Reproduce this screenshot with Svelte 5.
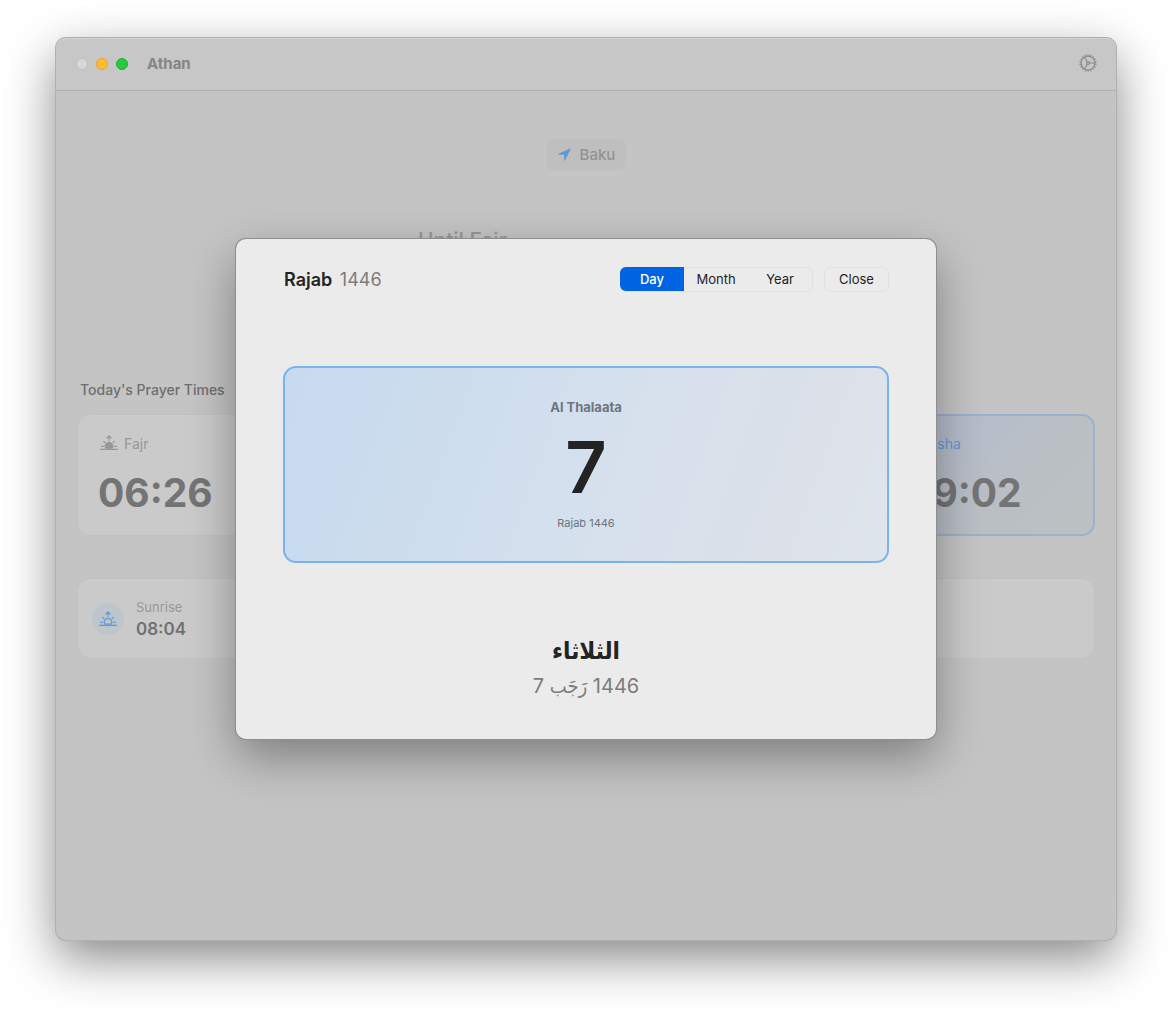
<script>
  const views = ['Day', 'Month', 'Year'];
  let view = $state('Day');
  let open = $state(true);

  // Teeth of the settings gear, one every 20 degrees
  const teeth = Array.from({ length: 18 }, (_, i) => i * 20);
</script>

{#snippet sunrise(filled)}
  <svg class="sun" viewBox="0 0 18 16" aria-hidden="true">
    <path d="M9 5.4V1.200M6.800 3.200 9 1l2.200 2.200" />
    <path d="M.7 14.400h16.600M1.600 11.400h1.600M14.800 11.400h1.600M3.700 6.300l1.200 1.200M14.300 6.300l-1.200 1.200" />
    <path class:filled d="M5.900 13.200a3.700 3.700 0 1 1 6.200 0z" />
  </svg>
{/snippet}

<div class="desktop">
  <div class="window">
    <header class="titlebar">
      <div class="lights">
        <button class="light" aria-label="Close window"></button>
        <button class="light amber" aria-label="Minimize window"></button>
        <button class="light green" aria-label="Zoom window"></button>
      </div>
      <h1>Athan</h1>
      <button class="gear" aria-label="Settings">
        <svg viewBox="0 0 18 18" aria-hidden="true">
          <circle cx="9" cy="9" r="6.900" />
          <circle cx="9" cy="9" r="1.400" />
          <path d="M10.500 9H16M8.200 7.700 5.500 3M8.200 10.300 5.500 15" />
          {#each teeth as angle}
            <path d="M9 2V.3" transform="rotate({angle} 9 9)" />
          {/each}
        </svg>
      </button>
    </header>

    <main>
      <button class="place">
        <svg viewBox="0 0 12 12" aria-hidden="true"><path d="M11.2.4.5 5.3c-.6.3-.5.9.2.9l4.900.1.1 4.900c0 .7.6.8.9.2L11.700.9c.2-.4-.1-.7-.5-.5z" /></svg>
        Baku
      </button>

      <section class="next"><h2>Until Fajr</h2></section>

      <h2 class="heading">Today's Prayer Times</h2>
      <section class="prayers">
        <article class="prayer">
          <div class="label">{@render sunrise(true)}Fajr</div>
          <div class="time">06:26</div>
        </article>
        <article class="prayer current">
          <div class="label">
            <svg class="moon" viewBox="0 0 12 16" aria-hidden="true"><path class="filled" d="M5 3a5 5 0 1 0 6 7A6 6 0 0 1 5 3z" /></svg>Isha
          </div>
          <div class="time">19:02</div>
        </article>
      </section>

      <section class="extra">
        <div class="badge">{@render sunrise(false)}</div>
        <div>
          <div class="name">Sunrise</div>
          <div class="clock">08:04</div>
        </div>
      </section>
    </main>

    {#if open}
      <div class="sheet" role="dialog" aria-label="Calendar">
        <div class="toolbar">
          <h2>Rajab <span>1446</span></h2>
          <div class="segments">
            {#each views as name}
              <button class:active={view === name} onclick={() => (view = name)}>{name}</button>
            {/each}
          </div>
          <button class="close" onclick={() => (open = false)}>Close</button>
        </div>
        <div class="day">
          <div class="weekday">Al Thalaata</div>
          <div class="number">7</div>
          <div class="month">Rajab 1446</div>
        </div>
        <div class="arabic" lang="ar" dir="rtl">
          <div class="arabic-day">الثلاثاء</div>
          <div class="arabic-date">1446 رَجَب 7</div>
        </div>
      </div>
    {/if}
  </div>
</div>

<style>
  :global(body) {
    margin: 0;
    background: #fff;
    font-family: Inter, "DejaVu Sans", sans-serif;
  }
  h1, h2 { margin: 0; font-weight: 500; }
  button {
    margin: 0;
    padding: 0;
    border: 0;
    background: none;
    font: inherit;
    color: inherit;
  }
  svg { display: block; fill: none; stroke: currentColor; }

  .desktop {
    box-sizing: border-box;
    min-height: 100vh;
    padding: 38px 56px 74px;
    display: flex;
  }
  .window {
    position: relative;
    flex: 1;
    border-radius: 10px;
    background: #c4c4c4;
    box-shadow: 0 0 0 1px #b0b0b0, 0 18px 50px rgba(0, 0, 0, 0.48);
  }
  .titlebar {
    display: flex;
    align-items: center;
    box-sizing: border-box;
    height: 53px;
    padding: 0 18px 2px 20px;
    border-bottom: 1px solid #b0b0b0;
    border-radius: 10px 10px 0 0;
    background: #c7c7c7;
    box-shadow: inset 0 1px #d2d2d2;
  }
  .lights { display: flex; gap: 8px; padding-top: 2px; }
  .light {
    width: 12px;
    height: 12px;
    border: 1px solid #c0bfbe;
    border-radius: 50%;
    background: #d9d8d7;
  }
  .amber { background: #febc2e; border-color: #e9a526; }
  .green { background: #28c840; border-color: #1fae33; }
  h1 {
    flex: 1;
    margin-left: 19px;
    font-size: 15px;
    font-weight: 700;
    color: #858585;
  }
  .gear { width: 20px; height: 18px; color: #8a8a8a; }
  .gear svg { width: 20px; height: 18px; stroke-width: 1.2; }

  main { padding: 48px 21px 24px; }
  .place {
    display: flex;
    align-items: center;
    gap: 9px;
    height: 31px;
    margin: 0 auto;
    padding: 0 11px 0 12px;
    border-radius: 6px;
    background: #bfbfbf;
    font-size: 15px;
    font-weight: 500;
    color: #929292;
  }
  .place svg { width: 13px; height: 13px; fill: #6298d3; stroke: none; }
  .next {
    box-sizing: border-box;
    width: 336px;
    min-height: 210px;
    margin: 0 auto;
    padding-top: 59px;
  }
  .next h2 { font-size: 21px; line-height: 24px; color: #979797; }
  .heading {
    margin-left: 3px;
    font-size: 14px;
    line-height: 20px;
    font-weight: 500;
    color: #6e6e6e;
  }
  .prayers {
    display: grid;
    grid-template-columns: repeat(5, 1fr);
    gap: 4px;
    margin-top: 14px;
  }
  .prayer {
    box-sizing: border-box;
    height: 122px;
    padding: 17px 20px;
    border: 1px solid #c1c1c1;
    border-radius: 13px;
    background: #cacaca;
  }
  .current {
    grid-column: 5;
    border: 2px solid #98b1ce;
    padding: 16px 19px;
    background: linear-gradient(135deg, #b3bccb, #b8bec8 40%, #babfc4 60%, #bcc1c4);
  }
  .label {
    display: flex;
    align-items: center;
    gap: 6px;
    height: 22px;
    font-size: 14px;
    color: #979797;
  }
  .current .label { color: #6298d3; }
  .sun { width: 18px; height: 16px; margin-left: 2px; stroke-width: 1.2; stroke-linecap: round; stroke-linejoin: round; }
  .moon { width: 12px; height: 16px; }
  .filled { fill: currentColor; }
  .time {
    margin-top: 15px;
    font-size: 39px;
    line-height: 48px;
    font-weight: 700;
    color: #747474;
  }
  .extra {
    display: flex;
    align-items: center;
    gap: 12px;
    box-sizing: border-box;
    height: 81px;
    margin-top: 42px;
    padding: 0 14px;
    border: 1px solid #c1c1c1;
    border-radius: 13px;
    background: #cacaca;
  }
  .badge {
    display: grid;
    place-items: center;
    width: 32px;
    height: 32px;
    border-radius: 50%;
    background: #bdc5cd;
    color: #6298d3;
  }
  .badge .sun { margin: 0; }
  .name { font-size: 13px; line-height: 20px; color: #989898; }
  .clock { font-size: 17px; line-height: 24px; font-weight: 600; color: #707070; }

  /* The sheet floats over the window, centred in it */
  .sheet {
    position: absolute;
    inset: 0;
    box-sizing: border-box;
    width: 700px;
    max-width: 100%;
    height: fit-content;
    margin: auto;
    padding: 28px 47px 38px;
    border-radius: 10px;
    background: #ebebeb;
    box-shadow: 0 0 0 1px #8e8e8e, 0 18px 48px rgba(0, 0, 0, 0.36);
    color: #232323;
  }
  .toolbar { display: flex; align-items: center; height: 25px; }
  .toolbar h2 { flex: 1; margin-left: 1px; font-size: 18px; font-weight: 600; }
  .toolbar span { margin-left: 3px; font-weight: 400; color: #7c7c7c; }
  .segments, .close {
    box-sizing: border-box;
    height: 25px;
    border: 1px solid #e2e2e2;
    border-radius: 6px;
    font-size: 13px;
  }
  .segments { display: flex; width: 193px; }
  .segments button { flex: 1; padding-bottom: 1px; }
  .segments .active {
    margin: -1px 0 0 -1px;
    border-radius: 6px 0 0 6px;
    background: #0063e1;
    color: #fff;
    font-weight: 500;
  }
  .close { width: 65px; margin-left: 11px; padding-bottom: 1px; }
  .day {
    display: flex;
    flex-direction: column;
    align-items: center;
    box-sizing: border-box;
    height: 197px;
    margin-top: 74px;
    padding-top: 29px;
    border: 2px solid #7ab1f1;
    border-radius: 13px;
    background: linear-gradient(110deg, #c7daf1, #cbdced 20%, #d4e0ed 50%, #d9e1eb 68%, #dbe0e9 80%, #dfe5ed);
  }
  .weekday { font-size: 13px; line-height: 20px; font-weight: 700; color: #6c757d; }
  .number { margin-top: 10px; font-size: 72px; line-height: 80px; font-weight: 600; }
  .month { margin-top: 6px; font-size: 11px; line-height: 20px; color: #6c757d; }
  .arabic {
    margin-top: 68px;
    font-family: Inter, "DejaVu Sans Condensed", "DejaVu Sans", sans-serif;
    text-align: center;
  }
  .arabic-day { font-size: 24px; line-height: 40px; font-weight: 700; }
  .arabic-date { font-size: 20px; line-height: 30px; color: #7c7c7c; }
</style>
